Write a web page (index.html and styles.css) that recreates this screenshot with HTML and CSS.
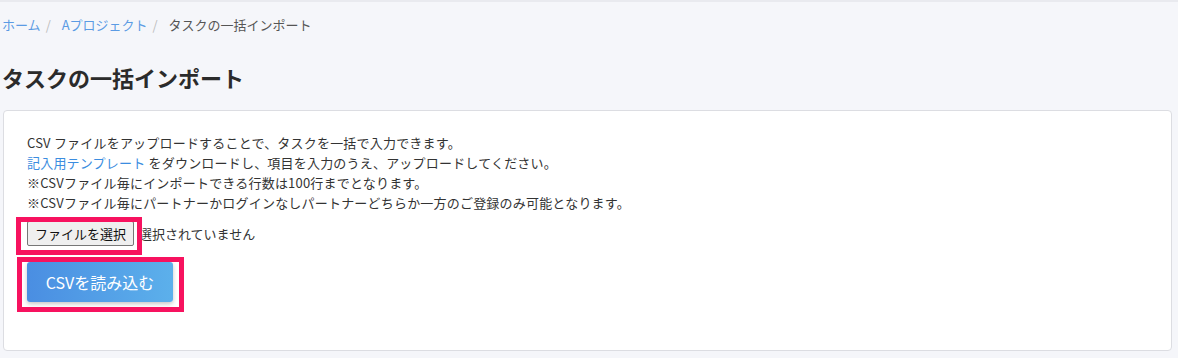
FILE: index.html
```html
<!DOCTYPE html>
<html lang="ja">
<head>
<meta charset="utf-8">
<link rel="stylesheet" href="styles.css">
</head>
<body>
<div class="topline"></div>
<div class="page">
  <nav class="breadcrumb">
    <a class="crumb-link" href="#">ホーム</a><span class="sep">/</span>
    <a class="crumb-link" href="#">Aプロジェクト</a><span class="sep">/</span>
    <span class="crumb-current">タスクの一括インポート</span>
  </nav>
  <h1 class="title">タスクの一括インポート</h1>
  <section class="card">
    <p class="line">CSV ファイルをアップロードすることで、タスクを一括で入力できます。</p>
    <p class="line"><a class="link" href="#">記入用テンプレート</a> をダウンロードし、項目を入力のうえ、アップロードしてください。</p>
    <p class="line">※CSVファイル毎にインポートできる行数は100行までとなります。</p>
    <p class="line">※CSVファイル毎にパートナーかログインなしパートナーどちらか一方のご登録のみ可能となります。</p>
    <div class="file-row">
      <button class="file-btn" type="button">ファイルを選択</button><span class="file-status">選択されていません</span>
      <span class="annot annot-file"></span>
    </div>
    <div class="submit-row">
      <button class="csv-btn" type="button">CSVを読み込む</button>
      <span class="annot annot-csv"></span>
    </div>
  </section>
</div>
</body>
</html>
```
FILE: styles.css
```css
* { box-sizing: border-box; }
html, body { margin: 0; padding: 0; }
body {
  background: #f5f6fa;
  font-family: "Noto Sans CJK JP", "Noto Sans", sans-serif;
  color: #333;
  width: 1178px;
  height: 358px;
  overflow: hidden;
}
.topline { height: 2px; background: #e9eaef; }
.page { padding: 0 6px 0 2px; }
.breadcrumb {
  margin-top: 13px;
  font-size: 13px;
  line-height: 20px;
  height: 20px;
  white-space: nowrap;
}
.crumb-link { color: #5b9be4; text-decoration: none; }
.sep { color: #bdbdbd; margin: 0 8px 0 5px; }
.crumb-current { color: #555; }
.title {
  margin: 27px 0 0 0;
  font-size: 22px;
  line-height: 30px;
  font-weight: 700;
  color: #2b2b2b;
}
.card {
  margin: 18px 0 0 1px;
  background: #fff;
  border: 1px solid #dcdde2;
  border-radius: 4px;
  padding: 22px 23px 48px 23px;
  height: 241px;
}
.line {
  margin: 0;
  font-size: 13px;
  line-height: 20px;
  letter-spacing: 0.2px;
  white-space: nowrap;
}
.link { color: #3b8de0; text-decoration: none; }
.file-row {
  position: relative;
  margin-top: 8px;
  height: 25px;
  display: flex;
  align-items: center;
}
.file-btn {
  height: 25px;
  width: 107px;
  padding: 0;
  font-family: inherit;
  font-size: 13px;
  color: #111;
  background: #efefef;
  border: 1px solid #767676;
  border-radius: 2px;
}
.file-status {
  margin-left: 5px;
  font-size: 13px;
  color: #333;
}
.submit-row {
  position: relative;
  margin-top: 16px;
  height: 40px;
}
.csv-btn {
  width: 146px;
  height: 40px;
  border: none;
  border-radius: 3px;
  background: linear-gradient(90deg, #4a8ee2 0%, #5cb0eb 100%);
  color: #fff;
  font-family: inherit;
  font-size: 16px;
  box-shadow: 0 2px 4px rgba(0, 0, 0, 0.22);
  padding: 0;
}
.annot {
  position: absolute;
  border: 5px solid #f7125f;
  pointer-events: none;
}
.annot-file { left: -11px; top: -4px; width: 126px; height: 38px; }
.annot-csv { left: -10px; top: -5px; width: 167px; height: 55px; }
```
